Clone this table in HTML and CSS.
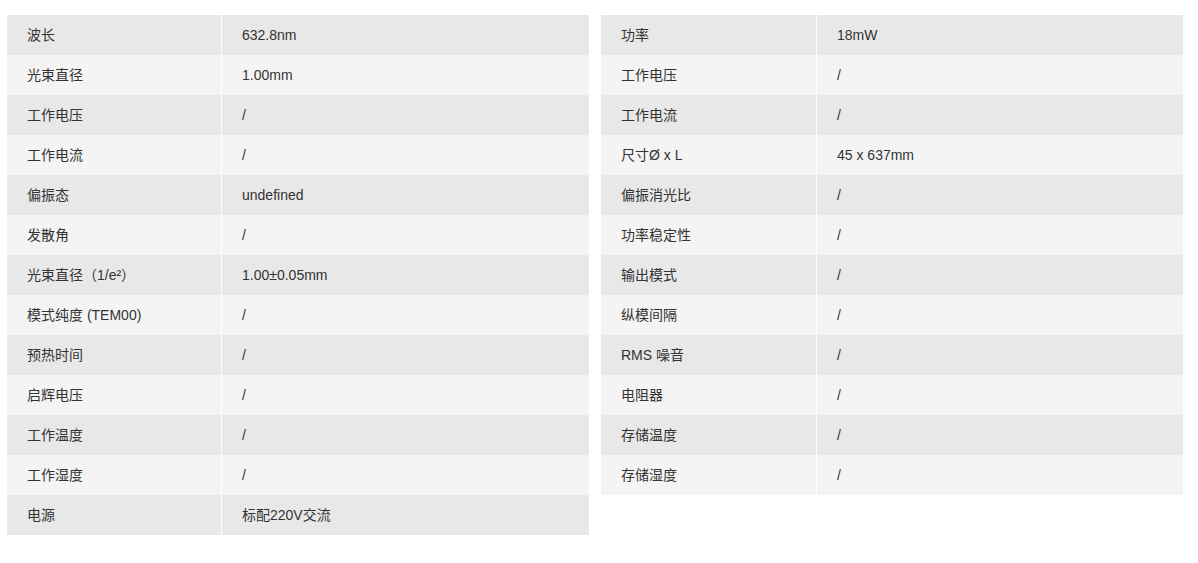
FILE: index.html
```html
<!DOCTYPE html>
<html lang="zh-CN">
<head>
<meta charset="utf-8">
<title>参数</title>
<link rel="stylesheet" href="styles.css">
</head>
<body>
<div class="specs">
  <table class="spec-table">
    <tbody>
      <tr><td class="k">波长</td><td class="v">632.8nm</td></tr>
      <tr><td class="k">光束直径</td><td class="v">1.00mm</td></tr>
      <tr><td class="k">工作电压</td><td class="v">/</td></tr>
      <tr><td class="k">工作电流</td><td class="v">/</td></tr>
      <tr><td class="k">偏振态</td><td class="v">undefined</td></tr>
      <tr><td class="k">发散角</td><td class="v">/</td></tr>
      <tr><td class="k">光束直径（1/e²）</td><td class="v">1.00±0.05mm</td></tr>
      <tr><td class="k">模式纯度 (TEM00)</td><td class="v">/</td></tr>
      <tr><td class="k">预热时间</td><td class="v">/</td></tr>
      <tr><td class="k">启辉电压</td><td class="v">/</td></tr>
      <tr><td class="k">工作温度</td><td class="v">/</td></tr>
      <tr><td class="k">工作湿度</td><td class="v">/</td></tr>
      <tr><td class="k">电源</td><td class="v">标配220V交流</td></tr>
    </tbody>
  </table>
  <table class="spec-table spec-table--right">
    <tbody>
      <tr><td class="k">功率</td><td class="v">18mW</td></tr>
      <tr><td class="k">工作电压</td><td class="v">/</td></tr>
      <tr><td class="k">工作电流</td><td class="v">/</td></tr>
      <tr><td class="k">尺寸Ø x L</td><td class="v">45 x 637mm</td></tr>
      <tr><td class="k">偏振消光比</td><td class="v">/</td></tr>
      <tr><td class="k">功率稳定性</td><td class="v">/</td></tr>
      <tr><td class="k">输出模式</td><td class="v">/</td></tr>
      <tr><td class="k">纵模间隔</td><td class="v">/</td></tr>
      <tr><td class="k">RMS 噪音</td><td class="v">/</td></tr>
      <tr><td class="k">电阻器</td><td class="v">/</td></tr>
      <tr><td class="k">存储温度</td><td class="v">/</td></tr>
      <tr><td class="k">存储湿度</td><td class="v">/</td></tr>
    </tbody>
  </table>
</div>
</body>
</html>
```
FILE: styles.css
```css
html, body {
  margin: 0;
  padding: 0;
  background: #ffffff;
}
body {
  padding: 15px 15px 0 7px;
  font-family: "Liberation Sans", "Noto Sans CJK SC", sans-serif;
  font-size: 14px;
  color: #333333;
}
.specs {
  display: flex;
  align-items: flex-start;
  gap: 12px;
}
.spec-table {
  width: 582px;
  border-collapse: collapse;
  border-spacing: 0;
  table-layout: fixed;
}
.spec-table tr {
  height: 40px;
}
.spec-table tr:nth-child(odd) {
  background: #e8e8e8;
}
.spec-table tr:nth-child(even) {
  background: #f5f4f4;
}
.spec-table td {
  padding: 0 0 0 20px;
  height: 40px;
  vertical-align: middle;
  line-height: 20px;
}
.spec-table td.k {
  width: 194px;
  border-right: 1px solid #ffffff;
}
.spec-table--right td.k {
  width: 195px;
}
```
